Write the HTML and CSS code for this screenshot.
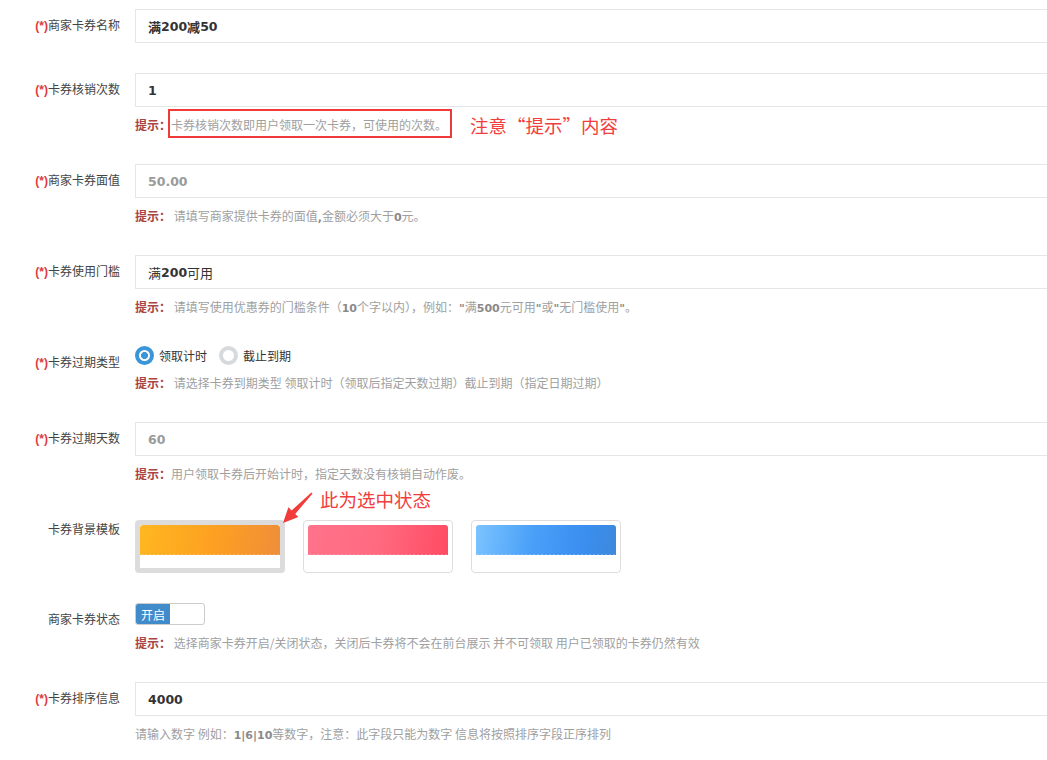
FILE: index.html
```html
<!DOCTYPE html>
<html lang="zh-CN">
<head>
<meta charset="utf-8">
<title>商家卡券</title>
<link rel="stylesheet" href="styles.css">
</head>
<body>
<div class="form">
  <div class="row">
    <label class="lbl"><span class="req">(*)</span>商家卡券名称</label>
    <div class="ctl">
      <div class="input strong">满<span class="num">200</span>减<span class="num">50</span></div>
    </div>
  </div>

  <div class="row">
    <label class="lbl"><span class="req">(*)</span>卡券核销次数</label>
    <div class="ctl">
      <div class="input"><span class="num">1</span></div>
      <div class="hint"><span class="tip">提示：</span>卡券核销次数即用户领取一次卡券，可使用的次数。</div>
    </div>
  </div>

  <div class="row">
    <label class="lbl"><span class="req">(*)</span>商家卡券面值</label>
    <div class="ctl">
      <div class="input muted"><span class="num">50.00</span></div>
      <div class="hint"><span class="tip">提示：</span> 请填写商家提供卡券的面值<b class="hn">,</b>金额必须大于<b class="hn">0</b>元。</div>
    </div>
  </div>

  <div class="row">
    <label class="lbl"><span class="req">(*)</span>卡券使用门槛</label>
    <div class="ctl">
      <div class="input">满<span class="num">200</span>可用</div>
      <div class="hint"><span class="tip">提示：</span> 请填写使用优惠券的门槛条件（<b class="hn">10</b>个字以内），例如：<b class="hn">"</b>满<b class="hn">500</b>元可用<b class="hn">"</b>或<b class="hn">"</b>无门槛使用<b class="hn">"</b>。</div>
    </div>
  </div>

  <div class="row">
    <label class="lbl"><span class="req">(*)</span>卡券过期类型</label>
    <div class="ctl">
      <div class="radios">
        <span class="radio"><span class="dot checked"></span>领取计时</span>
        <span class="radio"><span class="dot"></span>截止到期</span>
      </div>
      <div class="hint"><span class="tip">提示：</span> 请选择卡券到期类型 领取计时（领取后指定天数过期）截止到期（指定日期过期）</div>
    </div>
  </div>

  <div class="row">
    <label class="lbl"><span class="req">(*)</span>卡券过期天数</label>
    <div class="ctl">
      <div class="input muted"><span class="num">60</span></div>
      <div class="hint"><span class="tip">提示：</span>用户领取卡券后开始计时，指定天数没有核销自动作废。</div>
    </div>
  </div>

  <div class="row">
    <label class="lbl">卡券背景模板</label>
    <div class="ctl">
      <div class="tpls">
        <div class="tpl on"><div class="tkt"><div class="tkt-top orange"></div></div></div>
        <div class="tpl"><div class="tkt"><div class="tkt-top pink"></div></div></div>
        <div class="tpl"><div class="tkt"><div class="tkt-top blue"></div></div></div>
      </div>
    </div>
  </div>

  <div class="row">
    <label class="lbl">商家卡券状态</label>
    <div class="ctl">
      <div class="switch"><span class="sw-on">开启</span><span class="sw-off"></span></div>
      <div class="hint"><span class="tip">提示：</span> 选择商家卡券开启/关闭状态，关闭后卡券将不会在前台展示 并不可领取 用户已领取的卡券仍然有效</div>
    </div>
  </div>

  <div class="row">
    <label class="lbl"><span class="req">(*)</span>卡券排序信息</label>
    <div class="ctl">
      <div class="input"><span class="num">4000</span></div>
      <div class="hint">请输入数字 例如：<b class="hn">1|6|10</b>等数字，注意：此字段只能为数字 信息将按照排序字段正序排列</div>
    </div>
  </div>

  <div class="mark-box"></div>
  <div class="mark-text mark-1">注意“提示”内容</div>
  <div class="mark-text mark-2">此为选中状态</div>
  <svg class="mark-arrow" width="1047" height="760" viewBox="0 0 1047 760">
    <polygon points="283,523 298.4,517.1 295.2,513.9 312.6,493.5 311.4,492.5 291.6,510.5 288.4,507.3" fill="#f23b3b"/>
  </svg>
</div>
</body>
</html>
```
FILE: styles.css
```css
html, body {
  margin: 0;
  padding: 0;
  background: #fff;
  overflow: hidden;
}
body {
  font-family: "Noto Sans CJK SC", "Liberation Sans", sans-serif;
  font-size: 12px;
  color: #444;
}
.form {
  position: relative;
  width: 1200px;
  padding-top: 9px;
}
.row {
  display: flex;
  margin-bottom: 30px;
}
.lbl {
  flex: none;
  width: 120px;
  padding-right: 15px;
  padding-top: 7px;
  line-height: 17px;
  height: 17px;
  text-align: right;
  color: #444;
  white-space: nowrap;
}
.req {
  color: #e0393e;
  font-family: "Liberation Sans", sans-serif;
  font-weight: bold;
  line-height: 0;
}
.ctl {
  flex: 1;
  min-width: 0;
}
.input {
  height: 34px;
  box-sizing: border-box;
  border: 1px solid #e5e6e7;
  padding: 0 12px;
  display: flex;
  align-items: center;
  font-size: 13px;
  color: #333;
  background: #fff;
}
.input.strong {
  font-weight: bold;
}
.input.muted {
  color: #9a9a9a;
}
.num {
  font-family: "DejaVu Sans", sans-serif;
  font-weight: bold;
  font-size: 12.5px;
}
.hint {
  margin-top: 9px;
  height: 18px;
  line-height: 18px;
  color: #a0a0a0;
  white-space: nowrap;
}
.tip {
  color: #a94442;
  font-weight: bold;
}
.hn {
  font-family: "DejaVu Sans", sans-serif;
  font-size: 11px;
  line-height: 0;
  color: #8a8a8a;
}
.radios {
  display: flex;
  align-items: center;
  height: 19px;
  color: #333;
}
.radio {
  display: flex;
  align-items: center;
  margin-right: 12px;
}
.dot {
  width: 19px;
  height: 19px;
  box-sizing: border-box;
  border-radius: 50%;
  border: 4px solid #d6dadd;
  background: #fff;
  margin-right: 5px;
}
.dot.checked {
  border-color: #3a95d9;
  background: radial-gradient(circle, #3a95d9 0 3.2px, #fff 3.8px);
}
.tpls {
  display: flex;
  gap: 18px;
  padding-top: 7px;
}
.tpl {
  width: 150px;
  height: 53px;
  box-sizing: border-box;
  border: 1px solid #dddddd;
  border-radius: 4px;
  padding: 4px;
}
.tpl.on {
  border: 5px solid #dcdcdc;
  padding: 0;
}
.tkt {
  height: 42px;
  border-radius: 3px;
  overflow: hidden;
  background: #fff;
}
.tkt-top {
  height: 30px;
  position: relative;
}
.tkt-top::after {
  content: "";
  position: absolute;
  left: 0;
  right: 0;
  bottom: -1px;
  height: 3px;
  background: radial-gradient(circle at 2px 3px, #fff 1.2px, rgba(255,255,255,0) 1.7px) 0 0 / 4px 3px repeat-x;
}
.orange {
  background: linear-gradient(100deg, #ffb720 0%, #fd9f22 55%, #ee8e3a 100%);
}
.pink {
  background: linear-gradient(100deg, #ff738b 0%, #ff6a80 50%, #ff4b63 100%);
}
.blue {
  background: linear-gradient(100deg, #7cc4ff 0%, #4aa0f8 40%, #3a8ff0 75%, #3d88dc 100%);
}
.switch {
  width: 70px;
  height: 22px;
  box-sizing: border-box;
  border: 1px solid #cccccc;
  border-radius: 3px;
  overflow: hidden;
  display: flex;
  background: #fff;
}
.sw-on {
  width: 34px;
  background: #428bca;
  color: #fff;
  display: flex;
  align-items: center;
  justify-content: center;
  font-size: 12px;
}
.mark-box {
  position: absolute;
  left: 168px;
  top: 109px;
  width: 284px;
  height: 29px;
  box-sizing: border-box;
  border: 2px solid #f03a3a;
}
.mark-text {
  position: absolute;
  color: #f23d3d;
  font-size: 18.5px;
  line-height: 24px;
  white-space: nowrap;
}
.mark-1 {
  left: 470px;
  top: 113px;
}
.mark-2 {
  left: 320px;
  top: 487px;
}
.mark-arrow {
  position: absolute;
  left: 0;
  top: 0;
  pointer-events: none;
}
```
